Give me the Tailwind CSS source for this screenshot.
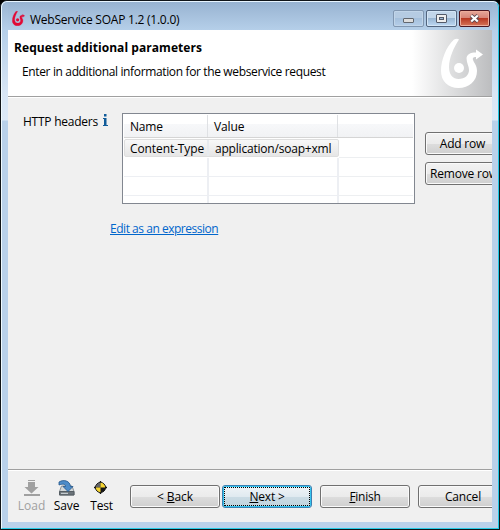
<!DOCTYPE html>
<html lang="en">
<head>
<meta charset="utf-8">
<title>WebService SOAP 1.2 (1.0.0)</title>
<script src="https://cdn.jsdelivr.net/npm/@tailwindcss/browser@4"></script>
</head>
<body class="w-[500px] h-[530px] overflow-hidden bg-black font-['Open_Sans','Noto_Sans',sans-serif] text-[12px] leading-[18px] text-black whitespace-nowrap">
<div class="w-[500px] h-[530px] border-t border-l border-b border-r border-[#101418] rounded-tl-[7px] rounded-tr-[7px] overflow-hidden bg-[#b9d1ea]">
 <div class="h-[528px] border-t border-l border-t-[#e8f5ff] border-l-[#effaff] border-r border-b border-r-[#20c8e5] border-b-[#26cbe6] rounded-t-[6px] bg-[linear-gradient(#9ab5d3_0px,#b5cfe9_28px,#d8e6f5_92px,#dce9f7_118px,#b9d1ea_119px)] pl-[6px] pr-[6px] flex flex-col">
  <header class="h-[28px] shrink-0 flex items-start bg-[linear-gradient(#98b3d1,#b5cfe9)]">
   <svg class="w-[13px] h-[15px] mt-[9px] ml-[4px]" viewBox="28 8 44 51"><path d="M41 9.500C44 8.500 46 8.500 47 9.500C42 17 37 28 37 37C37 45 41 49 46.500 49C53 49 57 45 57 40C57 36 54.500 33 54.500 28C55 24.500 58 22.500 64 22.500V19.500L71 24.500 64 29.500V27C61 27 60.500 28 61 30C62 33 65 35 65 41C65 51 57 58 46.500 58C36 58 29 51 29 41C29 30 34 17 41 9.500z" fill="#e20a36" stroke="#e20a36"/><circle cx="47" cy="38" r="5.500" fill="#e20a36"/></svg>
   <h1 class="ml-[5px] mt-[9px] w-[150px] tracking-[-0.24px]">WebService SOAP 1.2 (1.0.0)</h1>
   <div class="ml-auto mt-[8px] mr-[2px] flex gap-[2px]">
    <div class="w-[31px] h-[17px] border border-[#8197b1] rounded-[2px] bg-[linear-gradient(#b5cbe2_50%,#a5c0dc_50%,#b5cee9)] shadow-[inset_0_0_0_1px_#c1d5e9] flex items-center justify-center"><i class="block w-[11px] h-[5px] mt-[3px] border border-[#62676f] rounded-[1px] bg-[#ddd]"></i></div>
    <div class="w-[31px] h-[17px] border border-[#52657f] rounded-[2px] bg-[linear-gradient(#c2d6ea_50%,#99b6d3_50%,#bed9f4)] shadow-[inset_0_0_0_1px_#d3e5f6] flex items-center justify-center"><i class="block w-[11px] h-[9px] border border-[#535a69] rounded-[1px] bg-[#eee] p-[2px]"><b class="block w-[5px] h-[3px] border border-[#535a69] bg-[#9eb9d5]"></b></i></div>
    <div class="w-[31px] h-[17px] border border-[#4b1620] rounded-[2px] bg-[linear-gradient(#e4a79a,#d78375_48%,#b83923_50%,#d57559)] shadow-[inset_0_0_0_1px_#edac9a] flex items-center justify-center"><svg class="w-[11px] h-[9px]" viewBox="0 0 11 9"><path d="M2 1.500 9 7.500M9 1.500 2 7.500" stroke="#5c4951" stroke-width="4"/><path d="M2.200 1.500 8.800 7.500M8.800 1.500 2.200 7.500" stroke="#fff" stroke-width="2.200"/></svg></div>
   </div>
  </header>
  <main class="w-[484px] h-[492px] overflow-hidden bg-[#f0f0f0] flex flex-col">
   <section class="h-[67px] shrink-0 bg-white border-b border-[#a0a0a0] flex">
    <div class="w-[404px]">
     <h2 class="font-bold pl-[6px] mt-[9px] tracking-[0.06px]">Request additional parameters</h2>
     <p class="pl-[14px] mt-[6px] tracking-[-0.36px]">Enter in additional information for the webservice request</p>
    </div>
    <svg class="w-[80px] h-[66px] shrink-0" viewBox="0 0 80 66"><defs><linearGradient id="g"><stop stop-color="#fff"/><stop offset="1" stop-color="#bcbdbf"/></linearGradient></defs><path fill="url(#g)" d="M0 0h80v66H0z"/><path d="M42 9.500C44 8.500 46 8.500 47 9.500C42 17 37 28 37 37C37 45 41 49 46.500 49C53 49 57 45 57 40C57 36 54.500 33 54.500 28C55 24.500 58 22.500 64 22.500V19.500L71 24.500 64 29.500V27C61 27 60.500 28 61 30C62 33 65 35 65 41C65 51 57 58 46.500 58C36 58 29 51 29 41C29 30 34 17 42 9.500z" fill="#fff"/><circle cx="47" cy="38" r="5" fill="#fff"/></svg>
   </section>
   <section class="h-[373px] shrink-0 border-t border-white border-b border-b-[#a0a0a0] flex">
    <div class="w-[114px] shrink-0 pl-[15px] pt-[14px] flex items-start"><span class="w-[75px] shrink-0 pt-[1px] tracking-[-0.25px]">HTTP headers</span><svg class="w-[5px] h-[12px] shrink-0 ml-[5px] mt-[2px]" viewBox="0 0 5 12"><path d="M1 0h2.500v2.500H1zM0 4h3.500v7H5v1H0v-1h1V5H0z" fill="#105b99"/></svg></div>
    <div class="w-[293px] pt-[15px] shrink-0">
     <div class="h-[91px] border border-[#828790] bg-white p-[1px] overflow-hidden">
      <div class="h-[23px] flex border-b border-[#d5d5d5] bg-[linear-gradient(#fff_40%,#f7f8fa_41%,#f1f2f4)]">
       <div class="w-[84px] pl-[6px] pt-[3px] border-r border-[#dfe1e4] tracking-[-0.2px]">Name</div><div class="w-[130px] pl-[6px] pt-[3px] border-r border-[#dfe1e4] tracking-[-0.1px]">Value</div>
      </div>
      <div class="h-[65px] grid grid-cols-[85px_130px_74px] grid-rows-[20px_19px_19px_7px]">
       <div class="col-span-2 my-[1px] border border-[#dedede] rounded-[2px] bg-[linear-gradient(#f8f8f8,#e6e6e6)] flex leading-[18px]"><span class="w-[82px] pl-[5px] tracking-[-0.1px]">Content-Type</span><span class="border-l-2 border-[#e6eaee] pl-[6px] tracking-[-0.2px]">application/soap+xml</span></div>
       <div class="border-b border-[#edeff1]"></div>
       <div class="border-b border-r-2 border-[#edeff3]"></div><div class="border-b border-r-2 border-[#edeff3]"></div><div class="border-b border-[#edeff1]"></div>
       <div class="border-b border-r-2 border-[#edeff3]"></div><div class="border-b border-r-2 border-[#edeff3]"></div><div class="border-b border-[#edeff1]"></div>
       <div class="border-r-2 border-[#edeff3]"></div><div class="border-r-2 border-[#edeff3]"></div><div></div>
      </div>
     </div>
     <a class="block w-[108px] ml-[-12px] mt-[16px] text-[#0066cc] underline underline-offset-1 tracking-[-0.47px]">Edit as an expression</a>
    </div>
    <div class="pt-[34px] pl-[10px] shrink-0 flex flex-col gap-[7px]">
     <button class="w-[75px] h-[23px] border border-[#707070] rounded-[3px] shadow-[inset_0_0_0_1px_#fafafa] bg-[linear-gradient(#f2f2f2,#ebebeb_50%,#dddddd_51%,#cfcfcf)] leading-[18px] pt-[1px] tracking-[-0.2px]">Add row</button>
     <button class="w-[77px] h-[23px] border border-[#707070] rounded-[3px] shadow-[inset_0_0_0_1px_#fafafa] bg-[linear-gradient(#f2f2f2,#ebebeb_50%,#dddddd_51%,#cfcfcf)] leading-[18px] pt-[1px] text-left pl-[4px] tracking-[-0.2px]">Remove row</button>
    </div>
   </section>
   <footer class="h-[52px] shrink-0 border-t border-white flex">
    <div class="w-[122px] shrink-0 flex pt-[9px]">
     <div class="w-[27px] ml-[10px] flex flex-col items-center text-[#a0a0a0]"><svg class="w-[17px] h-[17px]" viewBox="0 0 17 17"><path d="M5 0h7v1H5zM5 2h7v5h3.500l-7 6.500L1.500 7H5zM1 14h16v2H1z" fill="#a0a0a0"/></svg><span>Load</span></div>
     <div class="w-[25px] ml-[9px] flex flex-col items-center"><svg class="w-[17px] h-[17px]" viewBox="0 0 17 17"><path d="M3.500 6h10.500l2 5.500v3.500H1.500v-3.500z" fill="#d3d8da" stroke="#8a9196"/><path d="M1.500 11.500H16V15H1.500z" fill="#6b7379" stroke="#555d63"/><path d="M3 13.300h7" stroke="#dce2e5"/><path d="M1 2C6-1 12 1 12.500 6.500H15L10 11.500 5 6.500h2.500C7.500 4 5 3.500 1 5z" fill="#4d8cc9" stroke="#24578c" stroke-width=".8"/></svg><span class="tracking-[-0.1px]">Save</span></div>
     <div class="w-[23px] ml-[11px] flex flex-col items-center"><svg class="w-[13px] h-[13px] mt-[1px] mb-[3px] mr-[2px]" viewBox="0 0 13 13"><path d="M6.500 0v13M0 6.500h13" stroke="#111" stroke-width="1.400"/><circle cx="6.500" cy="6.500" r="5" fill="#151515" stroke="#111"/><path d="M6.500 6.500V1.800A4.700 4.700 0 0 0 1.800 6.500z" fill="#666"/><path d="M6.500 6.500V1.800A4.700 4.700 0 0 1 11.200 6.500zM6.500 6.500v4.700A4.700 4.700 0 0 1 1.800 6.500z" fill="#f5d431"/></svg><span class="tracking-[-0.2px]">Test</span></div>
    </div>
    <div class="flex shrink-0 pt-[14px]">
     <button class="w-[90px] h-[23px] border border-[#707070] rounded-[3px] shadow-[inset_0_0_0_1px_#fafafa] bg-[linear-gradient(#f2f2f2,#ebebeb_50%,#dddddd_51%,#cfcfcf)] leading-[18px] pt-[1px] tracking-[-0.1px]">&lt; <u class="underline-offset-1">B</u>ack</button>
     <button class="w-[90px] h-[23px] ml-[2px] border border-[#3c7fb1] rounded-[3px] shadow-[inset_0_0_0_1px_#35c5ef] bg-[linear-gradient(#f0f4f7,#e0eaf0_50%,#cbdce5_51%,#c1d3dd)] p-[1px]"><span class="block h-[19px] border border-dotted border-black leading-[18px] tracking-[-0.2px]"><u class="underline-offset-1">N</u>ext &gt;</span></button>
     <button class="w-[90px] h-[23px] ml-[8px] border border-[#707070] rounded-[3px] shadow-[inset_0_0_0_1px_#fafafa] bg-[linear-gradient(#f2f2f2,#ebebeb_50%,#dddddd_51%,#cfcfcf)] leading-[18px] pt-[1px] tracking-[-0.25px]"><u class="underline-offset-1">F</u>inish</button>
     <button class="w-[90px] h-[23px] ml-[8px] border border-[#707070] rounded-[3px] shadow-[inset_0_0_0_1px_#fafafa] bg-[linear-gradient(#f2f2f2,#ebebeb_50%,#dddddd_51%,#cfcfcf)] leading-[18px] pt-[1px] tracking-[-0.15px]">Cancel</button>
    </div>
   </footer>
  </main>
 </div>
</div>
</body>
</html>
